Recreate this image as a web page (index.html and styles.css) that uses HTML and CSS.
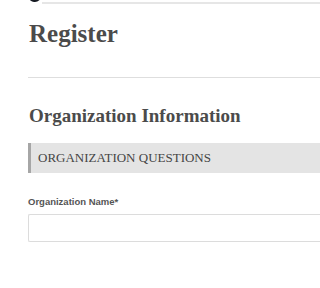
FILE: index.html
```html
<!DOCTYPE html>
<html>
<head>
<meta charset="utf-8">
<link rel="stylesheet" href="styles.css">
</head>
<body>
<div class="top">
  <span class="blob"></span>
  <span class="topline"></span>
</div>
<main class="page">
  <h1 class="title">Register</h1>
  <hr class="rule">
  <h2 class="section">Organization Information</h2>
  <div class="qbox">ORGANIZATION QUESTIONS</div>
  <label class="label" for="org">Organization Name*</label>
  <input class="field" id="org" type="text">
</main>
</body>
</html>
```
FILE: styles.css
```css
html, body {
  margin: 0;
  padding: 0;
  background: #fff;
  overflow: hidden;
}
.top {
  position: relative;
  height: 5px;
  display: flex;
  align-items: flex-end;
}
.blob {
  position: absolute;
  left: 29px;
  top: -9px;
  width: 12px;
  height: 11px;
  border-radius: 0 0 6px 5px;
  background: #161a22;
}
.topline {
  display: block;
  flex: 1;
  margin-left: 42px;
  margin-bottom: 1px;
  height: 2px;
  background: #e6e6e6;
}
.page {
  padding-left: 28px;
  display: flex;
  flex-direction: column;
  align-items: stretch;
}
.title {
  margin: 14px 0 0 1px;
  font-family: "Liberation Serif", serif;
  font-weight: bold;
  font-size: 25px;
  line-height: 30px;
  color: #4b4b4b;
}
.rule {
  margin: 28px 0 0 0;
  border: 0;
  height: 1px;
  background: #dedede;
}
.section {
  margin: 26px 0 0 1px;
  font-family: "Liberation Serif", serif;
  font-weight: bold;
  font-size: 19px;
  line-height: 24px;
  color: #4b4b4b;
}
.qbox {
  margin-top: 15px;
  height: 30px;
  line-height: 30px;
  background: #e4e4e4;
  border-left: 3px solid #a6a6a6;
  padding-left: 7px;
  font-family: "Liberation Serif", serif;
  font-size: 13px;
  color: #444;
}
.label {
  margin-top: 23px;
  font-family: "Liberation Sans", Arial, sans-serif;
  font-weight: bold;
  font-size: 9.5px;
  line-height: 12px;
  color: #555;
}
.field {
  margin: 6px 0 0 0;
  height: 28px;
  box-sizing: border-box;
  border: 1px solid #dcdcdc;
  border-right: 0;
  border-radius: 2px 0 0 2px;
  background: #fff;
  padding: 0 6px;
}
```
